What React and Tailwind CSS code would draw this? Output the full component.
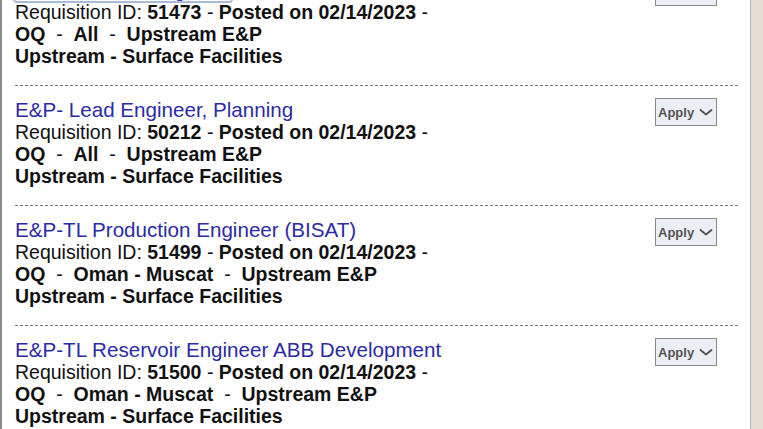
import React from 'react';

const jobs = [
  {
    title: 'E&P-Facilities Engineer',
    id: '51473',
    location: 'All',
  },
  {
    title: 'E&P- Lead Engineer, Planning',
    id: '50212',
    location: 'All',
  },
  {
    title: 'E&P-TL Production Engineer (BISAT)',
    id: '51499',
    location: 'Oman - Muscat',
  },
  {
    title: 'E&P-TL Reservoir Engineer ABB Development',
    id: '51500',
    location: 'Oman - Muscat',
  },
];

const ApplyButton = () => (
  <button className="flex items-center gap-[5px] h-[28px] w-[62px] pl-[2px] border border-[#8a8a8a] bg-[#eceef5] text-[13px] font-bold text-[#555] leading-none">
    Apply
    <svg width="14" height="8" viewBox="0 0 14 8" fill="none">
      <path d="M1.5 2l5.5 4.5 5.5-4.5" stroke="#555" strokeWidth="1.9" strokeLinecap="round" strokeLinejoin="round" />
    </svg>
  </button>
);

const JobRow = ({ job, first }) => (
  <div
    className={`flex justify-between items-start pt-[13px] pb-[18px] ${
      first ? '' : 'border-t border-dashed border-[#777]'
    }`}
  >
    <div className="text-[19.5px] leading-[22px] text-[#111]">
      <div className="text-[20.6px]">
        <a
          href="#"
          className={`text-[#2b2ba6] ${first ? 'outline-2 outline-[#a9bcd6] rounded-[2px]' : ''}`}
        >
          {job.title}
        </a>
      </div>
      <div>
        Requisition ID: <b>{job.id}</b> - <b>Posted on 02/14/2023</b> -
      </div>
      <div>
        <b>OQ</b>&nbsp; -&nbsp; <b>{job.location}</b>&nbsp; -&nbsp; <b>Upstream E&amp;P</b>
      </div>
      <div>
        <b>Upstream - Surface Facilities</b>
      </div>
    </div>
    <div className="mr-[21px] -mt-[1px]">
      <ApplyButton />
    </div>
  </div>
);

export default function App() {
  return (
    <div
      className="flex h-[429px] w-[763px] overflow-hidden bg-white"
      style={{ fontFamily: '"Liberation Sans", Arial, Helvetica, sans-serif' }}
    >
      <div className="flex-1 border-l-2 border-[#8c8c8c] pl-[13px] pr-[12px]">
        <div className="-mt-[34px]">
          {jobs.map((job, i) => (
            <JobRow key={job.id} job={job} first={i === 0} />
          ))}
        </div>
      </div>
      <div className="w-[13px] border-l border-[#b9b6ae] bg-[#e2ded5]" />
    </div>
  );
}
